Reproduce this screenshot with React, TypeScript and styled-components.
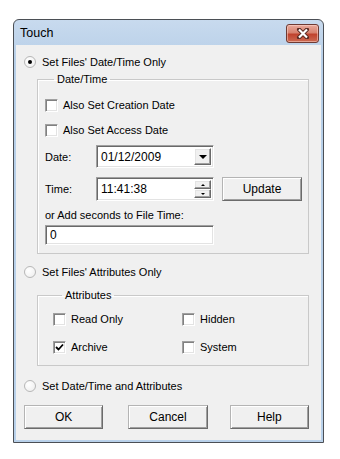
import React from "react";
import styled, { createGlobalStyle } from "styled-components";

const GlobalStyle = createGlobalStyle`
  html, body {
    margin: 0;
    padding: 0;
    background: #ffffff;
  }
  body {
    font-family: "Liberation Sans", Arial, sans-serif;
    font-size: 11px;
    color: #000;
  }
`;

const Window = styled.div`
  box-sizing: border-box;
  margin: 19px 0 0 13px;
  width: 311px;
  height: 424px;
  border: 1px solid #4b4f55;
  border-radius: 6px 6px 0 0;
  background: linear-gradient(#c8daee, #b7cfe8 40px, #b9d1ea);
  display: flex;
  flex-direction: column;
  overflow: hidden;
`;

const TitleBar = styled.div`
  height: 25px;
  flex: none;
  display: flex;
  align-items: center;
  justify-content: space-between;
  padding: 0 4px 0 6px;
`;

const Title = styled.span`
  font-size: 12.5px;
  color: #000;
  padding-top: 1px;
`;

const CloseButton = styled.div`
  box-sizing: border-box;
  width: 33px;
  height: 19px;
  margin-top: 2px;
  border: 1px solid #6e3a33;
  border-radius: 3px;
  background: linear-gradient(#e9a99b, #d7826f 45%, #c0432e 55%, #cc6a52);
  box-shadow: inset 0 0 0 1px rgba(255, 220, 210, 0.5);
  display: flex;
  align-items: center;
  justify-content: center;
`;

const Client = styled.div`
  flex: 1;
  margin: 0 2px 2px 2px;
  background: #f0f0f0;
  padding: 9px 12px 0 8px;
  display: flex;
  flex-direction: column;
`;

const RadioRow = styled.label<{ $mt?: number }>`
  display: flex;
  align-items: center;
  height: 16px;
  gap: 6px;
  margin-top: ${({ $mt }) => $mt ?? 0}px;
`;

const Radio = styled.span<{ $checked?: boolean }>`
  box-sizing: border-box;
  width: 12px;
  height: 12px;
  border-radius: 50%;
  border: 1px solid #b7b7b7;
  background: radial-gradient(circle at 35% 35%, #ffffff, #f2f2f2 70%, #e0e0e0);
  display: flex;
  align-items: center;
  justify-content: center;
  &::after {
    content: "";
    width: 4px;
    height: 4px;
    border-radius: 50%;
    background: #000;
    display: ${({ $checked }) => ($checked ? "block" : "none")};
  }
`;

const GroupBox = styled.fieldset<{ $mt: number; $pl: number; $pb: number }>`
  margin: ${({ $mt }) => $mt}px 0 0 13px;
  padding: 0 0 ${({ $pb }) => $pb}px ${({ $pl }) => $pl}px;
  border: 1px solid #c9c9c9;
  box-shadow: 1px 1px 0 #ffffff inset;
  display: flex;
  flex-direction: column;
`;

const Legend = styled.legend`
  margin-left: 9px;
  padding: 0 3px;
  font-size: 11px;
  line-height: 13px;
`;

const CheckRow = styled.label<{ $mt?: number; $w?: number }>`
  display: flex;
  align-items: center;
  height: 16px;
  gap: 5px;
  width: ${({ $w }) => ($w ? `${$w}px` : "auto")};
  margin-top: ${({ $mt }) => $mt ?? 0}px;
`;

const CheckBox = styled.span`
  box-sizing: border-box;
  width: 13px;
  height: 13px;
  flex: none;
  background: #fff;
  border: 1px solid;
  border-color: #a0a0a0 #ffffff #ffffff #a0a0a0;
  box-shadow: inset 1px 1px 0 #808080, inset -1px -1px 0 #e3e3e3;
  display: flex;
  align-items: center;
  justify-content: center;
`;

const FieldRow = styled.div<{ $mt: number; $h: number }>`
  display: flex;
  align-items: center;
  height: ${({ $h }) => $h}px;
  margin-top: ${({ $mt }) => $mt}px;
`;

const FieldLabel = styled.span`
  width: 51px;
  flex: none;
`;

const Sunken = styled.div<{ $w: number; $h: number }>`
  box-sizing: border-box;
  width: ${({ $w }) => $w}px;
  height: ${({ $h }) => $h}px;
  flex: none;
  background: #fff;
  border: 1px solid;
  border-color: #a0a0a0 #ffffff #ffffff #a0a0a0;
  box-shadow: inset 1px 1px 0 #696969, inset -1px -1px 0 #e3e3e3;
  display: flex;
  align-items: stretch;
  padding: 2px;
`;

const FieldText = styled.span`
  flex: 1;
  display: flex;
  align-items: center;
  padding-left: 2px;
  font-size: 12px;
`;

const SideButtons = styled.div`
  width: 17px;
  display: flex;
  flex-direction: column;
`;

const Raised = styled.div`
  flex: 1;
  box-sizing: border-box;
  background: #f0f0f0;
  border: 1px solid;
  border-color: #ffffff #696969 #696969 #ffffff;
  box-shadow: inset -1px -1px 0 #a0a0a0, inset 1px 1px 0 #e3e3e3;
  display: flex;
  align-items: center;
  justify-content: center;
`;

const Arrow = styled.span<{ $up?: boolean; $size: number }>`
  width: 0;
  height: 0;
  border-left: ${({ $size }) => $size}px solid transparent;
  border-right: ${({ $size }) => $size}px solid transparent;
  ${({ $up, $size }) =>
    $up
      ? `border-bottom: ${$size}px solid #000;`
      : `border-top: ${$size}px solid #000;`}
`;

const PushButton = styled.button<{ $w: number; $h?: number }>`
  box-sizing: border-box;
  width: ${({ $w }) => $w}px;
  height: ${({ $h }) => $h ?? 24}px;
  padding: 0;
  background: #f0f0f0;
  font-family: "Liberation Sans", Arial, sans-serif;
  font-size: 12px;
  color: #000;
  border: 1px solid;
  border-color: #b4b4b4 #6b6b6b #6b6b6b #b4b4b4;
  box-shadow: inset 1px 1px 0 #ffffff, inset -1px -1px 0 #a0a0a0;
`;

const ButtonBar = styled.div`
  display: flex;
  margin-top: 11px;
  gap: 0;
`;

const AttrGrid = styled.div<{ $mt: number }>`
  display: grid;
  grid-template-columns: 129px auto;
  row-gap: 12px;
  margin-top: ${({ $mt }) => $mt}px;
`;

const Check = () => (
  <svg width="9" height="9" viewBox="0 0 9 9">
    <path d="M1 4 L3.5 6.5 L8 1.5" fill="none" stroke="#000" strokeWidth="1.8" />
  </svg>
);

const CloseGlyph = () => (
  <svg width="14" height="11" viewBox="0 0 14 11">
    <path
      d="M3 1.5 L11 9.5 M11 1.5 L3 9.5"
      stroke="#5a2a22"
      strokeWidth="4"
      strokeLinecap="round"
    />
    <path d="M3 1.5 L11 9.5 M11 1.5 L3 9.5" stroke="#ffffff" strokeWidth="2.2" />
  </svg>
);

export default function App() {
  return (
    <>
      <GlobalStyle />
      <Window>
        <TitleBar>
          <Title>Touch</Title>
          <CloseButton>
            <CloseGlyph />
          </CloseButton>
        </TitleBar>
        <Client>
          <RadioRow>
            <Radio $checked />
            Set Files' Date/Time Only
          </RadioRow>

          <GroupBox $mt={3} $pl={7} $pb={8}>
            <Legend>Date/Time</Legend>
            <CheckRow $mt={11}>
              <CheckBox />
              Also Set Creation Date
            </CheckRow>
            <CheckRow $mt={9}>
              <CheckBox />
              Also Set Access Date
            </CheckRow>
            <FieldRow $mt={7} $h={23}>
              <FieldLabel>Date:</FieldLabel>
              <Sunken $w={118} $h={23}>
                <FieldText>01/12/2009</FieldText>
                <SideButtons>
                  <Raised>
                    <Arrow $size={4} />
                  </Raised>
                </SideButtons>
              </Sunken>
            </FieldRow>
            <FieldRow $mt={9} $h={24}>
              <FieldLabel>Time:</FieldLabel>
              <Sunken $w={118} $h={24}>
                <FieldText>11:41:38</FieldText>
                <SideButtons>
                  <Raised>
                    <Arrow $up $size={2} />
                  </Raised>
                  <Raised>
                    <Arrow $size={2} />
                  </Raised>
                </SideButtons>
              </Sunken>
              <PushButton $w={80} style={{ marginLeft: 8 }}>
                Update
              </PushButton>
            </FieldRow>
            <FieldRow $mt={7} $h={14}>
              or Add seconds to File Time:
            </FieldRow>
            <FieldRow $mt={3} $h={20}>
              <Sunken $w={169} $h={20}>
                <FieldText>0</FieldText>
              </Sunken>
            </FieldRow>
          </GroupBox>

          <RadioRow $mt={10}>
            <Radio />
            Set Files' Attributes Only
          </RadioRow>

          <GroupBox $mt={9} $pl={15} $pb={10}>
            <Legend>Attributes</Legend>
            <AttrGrid $mt={9}>
              <CheckRow $w={129}>
                <CheckBox />
                Read Only
              </CheckRow>
              <CheckRow>
                <CheckBox />
                Hidden
              </CheckRow>
              <CheckRow>
                <CheckBox>
                  <Check />
                </CheckBox>
                Archive
              </CheckRow>
              <CheckRow>
                <CheckBox />
                System
              </CheckRow>
            </AttrGrid>
          </GroupBox>

          <RadioRow $mt={12}>
            <Radio />
            Set Date/Time and Attributes
          </RadioRow>

          <ButtonBar>
            <PushButton $w={80}>OK</PushButton>
            <PushButton $w={80} style={{ marginLeft: 25 }}>
              Cancel
            </PushButton>
            <PushButton $w={80} style={{ marginLeft: 22 }}>
              Help
            </PushButton>
          </ButtonBar>
        </Client>
      </Window>
    </>
  );
}
